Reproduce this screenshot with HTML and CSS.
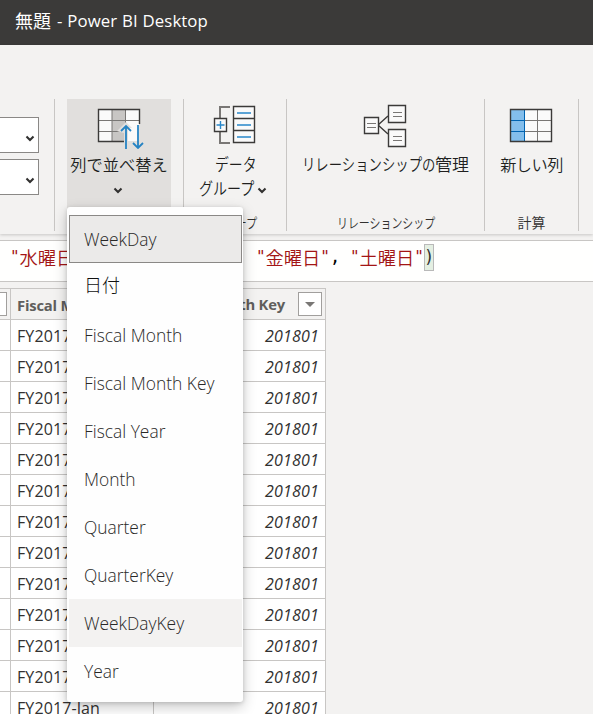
FILE: index.html
```html
<!DOCTYPE html>
<html lang="ja">
<head>
<meta charset="utf-8">
<title>無題 - Power BI Desktop</title>
<link rel="stylesheet" href="styles.css">
</head>
<body>
<header class="titlebar"><span class="title-jp">無題</span><span class="title-en">- Power BI Desktop</span></header>
<section class="ribbon">
  <div class="group g-fields">
    <div class="select"><svg width="10" height="7" viewBox="0 0 10 7"><path class="chev" d="M1.5 1.5 5 5 8.5 1.5"/></svg></div>
    <div class="select"><svg width="10" height="7" viewBox="0 0 10 7"><path class="chev" d="M1.5 1.5 5 5 8.5 1.5"/></svg></div>
  </div>
  <div class="group g-sort">
    <div class="command active">
      <svg class="icon" width="52" height="50" viewBox="0 0 52 50">
        <path fill="#fafafa" d="M5 11h41v32H5z"/><path fill="#c8c6c4" d="M19 11h13v32H19z"/>
        <path stroke="#797775" fill="none" d="M19 10v32M32.500 10v32M5 21.500h41M5 32.500h41"/>
        <path class="outline" d="M31 42.500H5.500v-32h41V25"/>
        <path fill="#e1dfdd" d="M24 32l9-9 6 6h12v21H31V34l-4-1z"/>
        <path fill="#fafafa" d="M35 29h6v-3h5v16H35z"/>
        <path class="arrow" d="M33 50V27m-5 5 5-5 5 5M45 26v23m-5-5 5 5 5-5"/>
      </svg>
      <span class="label sort-label">列で並べ替え</span>
      <svg class="down" width="10" height="7" viewBox="0 0 10 7"><path class="chev" d="M1.500 1.500 5 5 8.500 1.500"/></svg>
    </div>
  </div>
  <div class="group g-data">
    <div class="command">
      <svg class="icon" width="52" height="50" viewBox="0 0 52 50">
        <path fill="none" stroke="#797775" stroke-width="2" d="M23 8H13v11M13 33v11h10"/>
        <path class="sheet" d="M26.500 7.500h21v36h-21zM26.500 19.500h21M26.500 31.500h21M7.500 19.500h12v13h-12z"/>
        <path fill="none" stroke="#2988ca" stroke-width="1.400" d="M30 14h14M30 26h14M30 38h14M9.500 26h8M13.500 22v8"/>
      </svg>
      <span class="label"><span class="kana w-data">データ</span></span>
      <span class="label second"><span class="kana w-group">グループ</span><svg width="10" height="7" viewBox="0 0 10 7"><path class="chev" d="M1.500 1.500 5 5 8.500 1.500"/></svg></span>
    </div>
    <span class="caption"><span class="kana w-cap-group">グループ</span></span>
  </div>
  <div class="group g-rel">
    <div class="command">
      <svg class="icon" width="52" height="50" viewBox="0 0 52 50">
        <path class="outline" d="M19 26l10-9M19 26l10 9"/>
        <path class="sheet" d="M5.500 18.500h14v16h-14zM29.500 6.500h17v17h-17zM29.500 30.500h17v17h-17z"/>
        <path stroke="#797775" fill="none" d="M8 24.500h9M8 28.500h9M34 13.500h9M34 17.500h9M34 37.500h9M34 41.500h9"/>
      </svg>
      <span class="label"><span class="kana w-rel">リレーションシップの</span><span class="kanji">管理</span></span>
    </div>
    <span class="caption"><span class="kana w-cap-rel">リレーションシップ</span></span>
  </div>
  <div class="group g-calc">
    <div class="command">
      <svg class="icon" width="52" height="50" viewBox="0 0 52 50">
        <path fill="#fafafa" d="M5 11h41v32H5z"/><path fill="#83beec" d="M5 11h14v32H5z"/>
        <path stroke="#797775" fill="none" d="M32.500 10v32M19 21.500h27M19 32.500h27"/>
        <path stroke="#0063b1" fill="none" d="M19.500 10v32M5 21.500h14M5 32.500h14"/>
        <path class="outline" d="M5.500 10.500h41v32h-41z"/>
      </svg>
      <span class="label new-label">新しい列</span>
    </div>
    <span class="caption">計算</span>
  </div>
</section>
<section class="formula">
  <span class="str first"><q>"</q>水曜日<q>"</q></span><span class="str"><q>"</q>金曜日<q>"</q></span><span class="comma">,</span><span class="str"><q>"</q>土曜日<q>"</q></span><span class="paren">)</span>
</section>
<table class="grid">
  <colgroup><col class="c0"><col class="c1"><col class="c2"></colgroup>
  <thead><tr><th class="edge"><i></i></th><th>Fiscal Month</th><th class="key"><div><span>Fiscal Month Key</span><b class="filter"><svg width="10" height="5" viewBox="0 0 10 5"><path fill="#797775" d="M0 0h10L5 5z"/></svg></b></div></th></tr></thead>
  <tbody>
    <tr><td></td><td>FY2017-Jan</td><td class="num">201801</td></tr>
    <tr><td></td><td>FY2017-Jan</td><td class="num">201801</td></tr>
    <tr><td></td><td>FY2017-Jan</td><td class="num">201801</td></tr>
    <tr><td></td><td>FY2017-Jan</td><td class="num">201801</td></tr>
    <tr><td></td><td>FY2017-Jan</td><td class="num">201801</td></tr>
    <tr><td></td><td>FY2017-Jan</td><td class="num">201801</td></tr>
    <tr><td></td><td>FY2017-Jan</td><td class="num">201801</td></tr>
    <tr><td></td><td>FY2017-Jan</td><td class="num">201801</td></tr>
    <tr><td></td><td>FY2017-Jan</td><td class="num">201801</td></tr>
    <tr><td></td><td>FY2017-Jan</td><td class="num">201801</td></tr>
    <tr><td></td><td>FY2017-Jan</td><td class="num">201801</td></tr>
    <tr><td></td><td>FY2017-Jan</td><td class="num">201801</td></tr>
    <tr><td></td><td>FY2017-Jan</td><td class="num">201801</td></tr>
  </tbody>
</table>
<ul class="menu">
  <li class="selected">WeekDay</li>
  <li class="jp">日付</li>
  <li>Fiscal Month</li>
  <li>Fiscal Month Key</li>
  <li>Fiscal Year</li>
  <li>Month</li>
  <li>Quarter</li>
  <li>QuarterKey</li>
  <li class="hover">WeekDayKey</li>
  <li>Year</li>
</ul>
</body>
</html>
```
FILE: styles.css
```css
* { box-sizing: border-box; }
html, body { height: 100%; }
body {
  margin: 0;
  overflow: hidden;
  position: relative;
  background: #f3f2f1;
  color: #323130;
  font-family: "Open Sans", "Noto Sans CJK JP", sans-serif;
}
svg { display: block; flex: none; }
.titlebar {
  height: 45px;
  padding: 0 0 5px 15px;
  display: flex;
  align-items: center;
  gap: 6px;
  background: #3b3a39;
  color: #fff;
  font-size: 16.8px;
}
.title-jp { font-size: 18px; line-height: 24px; font-family: "Noto Sans CJK JP", sans-serif; }
.title-en { letter-spacing: .1px; word-spacing: .3px; }
.ribbon {
  height: 189px;
  padding-top: 54px;
  display: flex;
  align-items: flex-start;
  font-family: "Noto Sans CJK JP", sans-serif;
  font-weight: 350;
  box-shadow: 0 1px 3px rgba(0, 0, 0, .18);
}
.group {
  height: 132px;
  border-right: 1px solid #c8c6c4;
  display: flex;
  flex-direction: column;
  align-items: center;
  justify-content: space-between;
}
.g-fields { width: 55px; align-items: flex-start; justify-content: flex-start; gap: 6px; padding-top: 18px; }
.g-sort { width: 129px; }
.g-data { width: 103px; }
.g-rel { width: 198px; }
.g-calc { width: 94px; }
.select {
  width: 39px;
  height: 36px;
  border: 1px solid #8a8886;
  border-left: 0;
  background: #fff;
  display: flex;
  align-items: center;
  justify-content: flex-end;
  padding: 7px 3px 0 0;
}
.chev { fill: none; stroke: #323130; stroke-width: 2.1; }
.outline { fill: none; stroke: #3b3a39; stroke-width: 1.4; }
.sheet { fill: #fafafa; stroke: #3b3a39; stroke-width: 1.4; }
.arrow { fill: none; stroke: #2583c3; stroke-width: 1.8; }
.command { width: 100%; display: flex; flex-direction: column; align-items: center; }
.active { width: 104px; height: 132px; background: #e1dfdd; }
.icon { margin: 0 1px 3px 0; }
.g-data .icon { margin-right: 4px; }
.label { height: 24px; line-height: 24px; font-size: 16px; color: #201f1e; white-space: nowrap; display: flex; align-items: center; justify-content: center; }
.sort-label { font-size: 16.3px; }
.down { margin: 11px 2px 0 0; }
.second { margin-right: 5px; }
.second svg { margin: 5px 0 0 3px; }
.kana { display: block; flex: none; transform-origin: left; font-size: 16.5px; }
.w-data { width: 40px; transform: scaleX(.84); }
.w-group { width: 55px; transform: scaleX(.85); }
.w-rel { width: 133px; transform: scaleX(.81); }
.kanji { font-size: 17px; }
.new-label { font-size: 16.2px; letter-spacing: -.5px; }
.caption { height: 17px; line-height: 16px; font-size: 14px; white-space: nowrap; }
.caption .kana { font-size: 14px; }
.w-cap-group { width: 44px; transform: scaleX(.8); }
.w-cap-rel { width: 98px; transform: scaleX(.78); }
.formula {
  height: 42px;
  margin-top: 6px;
  padding: 0 0 7px 10px;
  border: solid #c8c6c4;
  border-width: 1px 0;
  background: #fffffe;
  display: flex;
  align-items: center;
  white-space: nowrap;
}
.str { color: #a31515; width: 74px; height: 26px; line-height: 24px; flex: none; display: flex; font-family: "Noto Sans CJK JP", sans-serif; font-size: 18.3px; font-weight: 350; }
.str q { quotes: none; width: 9.5px; flex: none; text-align: center; font-family: "DejaVu Sans Mono", monospace; font-size: 16px; }
.str q::before, .str q::after { content: none; }
.first { margin-right: 172px; }
.comma { width: 20px; height: 26px; line-height: 24px; color: #000; font-family: "DejaVu Sans Mono", monospace; font-size: 17px; }
.paren { width: 10px; height: 27px; line-height: 24px; border: 1px solid #b9b9b9; background: #e4efe2; font-family: "DejaVu Sans Mono", monospace; font-size: 17px; display: flex; justify-content: center; }
.grid { width: 326px; margin-top: 6px; table-layout: fixed; border-collapse: separate; border-spacing: 0; font-size: 16px; }
.c0 { width: 11px; }
.c1 { width: 143px; }
.c2 { width: 172px; }
.grid th, .grid td { height: 31px; padding: 1px 6px 0; border: solid #c8c6c4; border-width: 0 1px 1px 0; text-align: left; line-height: 20px; white-space: nowrap; overflow: hidden; }
.grid td { background: #fff; letter-spacing: .1px; padding-top: 2px; }
.grid th { height: 32px; border-top-width: 1px; color: #605e5c; font-weight: 700; font-size: 14.8px; letter-spacing: -.2px; }
.grid .num { text-align: right; font-style: italic; letter-spacing: .2px; padding-right: 6px; }
.grid .edge { padding: 0; }
.edge i { display: block; width: 7px; height: 24px; border: 1px solid #a19f9d; border-left: 0; background: #fff; }
.grid .key { padding: 0 3px 0 6px; }
.key div { display: flex; align-items: center; justify-content: flex-end; gap: 13px; }
.filter { width: 24px; height: 24px; border: 1px solid #a19f9d; background: #fff; display: flex; align-items: center; justify-content: center; }
.menu {
  position: absolute;
  left: 67px;
  top: 207px;
  width: 176px;
  height: 495px;
  margin: 0;
  padding: 8px 1px 7px 2px;
  list-style: none;
  background: #fefefe;
  border-radius: 3px;
  box-shadow: 0 5px 14px rgba(0, 0, 0, .22), 0 1px 4px rgba(0, 0, 0, .15);
  font-size: 17.4px;
  font-weight: 350;
  color: #292827;
}
.menu li { height: 48px; line-height: 49px; padding-left: 15px; white-space: nowrap; }
.menu .selected { border: 1px solid #8a8886; background: #ebeae9; padding-left: 14px; line-height: 47px; }
.menu .hover { background: #f3f2f1; }
.menu .jp { font: 300 18px/42px "Noto Sans CJK JP", sans-serif; color: #111; }
```
